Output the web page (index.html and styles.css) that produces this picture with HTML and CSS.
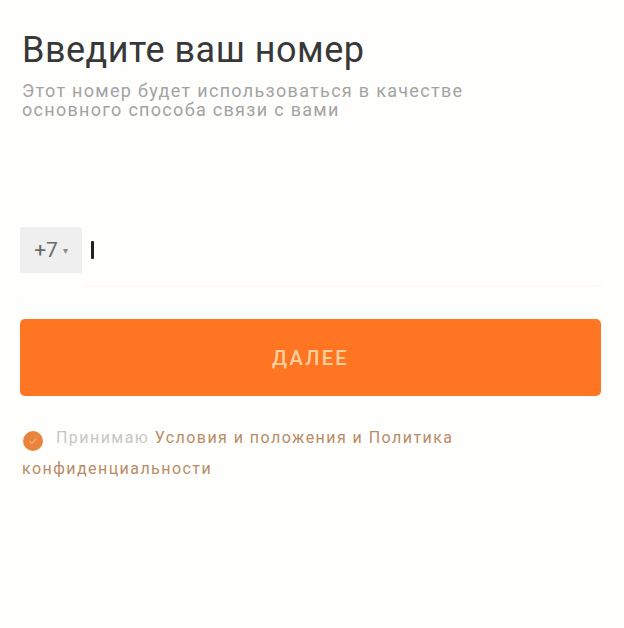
FILE: index.html
```html
<!DOCTYPE html>
<html lang="ru">
<head>
<meta charset="utf-8">
<link rel="stylesheet" href="styles.css">
</head>
<body>
<main class="screen">
  <h1 class="title">Введите ваш номер</h1>
  <p class="subtitle">Этот номер будет использоваться в качестве основного способа связи с вами</p>
  <div class="phone-row">
    <div class="code">+7 <span class="caret">▾</span></div>
    <div class="input"><span class="cursor"></span></div>
  </div>
  <button class="next">ДАЛЕЕ</button>
  <div class="terms">
    <span class="check"><svg width="12" height="12" viewBox="0 0 12 12"><path d="M2.5 6.2l2.3 2.3 4.7-5" fill="none" stroke="#f0a874" stroke-width="1.3"/></svg></span><span class="muted">Принимаю</span> <span class="link">Условия и положения и Политика конфиденциальности</span>
  </div>
</main>
</body>
</html>
```
FILE: styles.css
```css
html, body { margin: 0; padding: 0; background: #fefefd; }
body { font-family: Roboto, "Noto Sans", sans-serif; }
.screen { padding: 29px 22px 0 22px; width: 580px; }
.title { margin: 0; font-size: 36px; font-weight: 400; color: #383838; line-height: 42px; letter-spacing: 0.5px; }
.subtitle { margin: 10px 0 0 0; font-size: 18px; line-height: 19px; color: #a3a3a3; width: 500px; letter-spacing: 1.3px; }
.phone-row { display: flex; align-items: flex-start; margin-top: 108px; }
.code { width: 62px; height: 46px; margin-left: -2px; background: #efefef; color: #6a6a6a; font-size: 21px; display: flex; align-items: center; justify-content: center; border-radius: 2px; }
.caret { font-size: 10px; margin-left: 5px; color: #888; }
.input { flex: 1; height: 46px; display: flex; align-items: center; padding-left: 9px; border-bottom: 2px solid #fff8f4; padding-bottom: 12px; }
.cursor { width: 3px; height: 18px; background: #222; border-radius: 1px; }
.next { display: block; margin: 32px 0 0 -2px; width: 581px; height: 77px; border: none; border-radius: 5px; background: #ff7521; color: #fbcf9f; font-family: Roboto, sans-serif; font-size: 20px; font-weight: 500; letter-spacing: 2.3px; padding: 0; }
.terms { margin-top: 26px; font-size: 16px; line-height: 31px; width: 480px; letter-spacing: 1.45px; }
.check { display: inline-flex; align-items: center; justify-content: center; width: 20px; height: 20px; border-radius: 50%; background: #e8843c; vertical-align: -4px; margin-left: 1px; margin-right: 13px; }
.muted { color: #c7c7c7; }
.link { color: #b98c66; }
```
